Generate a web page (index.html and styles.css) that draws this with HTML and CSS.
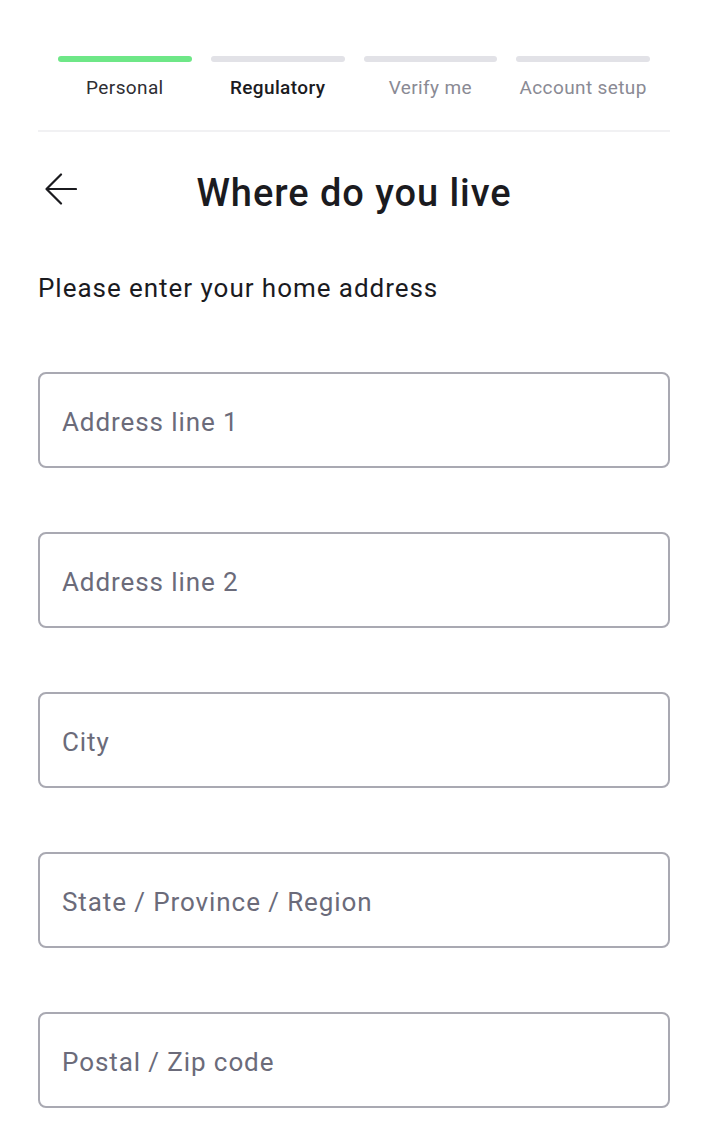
FILE: index.html
```html
<!DOCTYPE html>
<html lang="en">
<head>
  <meta charset="UTF-8" />
  <title>Where do you live</title>
  <meta name="viewport" content="width=device-width, initial-scale=1.0"/>
  <link rel="stylesheet" href="styles.css">
</head>
<body>

<div id="page">
  <div id="steps">
    <div class="step done">
      <div class="step-bar"></div>
      <span>Personal</span>
    </div>
    <div class="step current">
      <div class="step-bar"></div>
      <span>Regulatory</span>
    </div>
    <div class="step">
      <div class="step-bar"></div>
      <span>Verify me</span>
    </div>
    <div class="step">
      <div class="step-bar"></div>
      <span>Account setup</span>
    </div>
  </div>

  <div class="header">
    <button class="back-btn" aria-label="Back">
      <svg width="32" height="32" viewBox="0 0 32 32" fill="none" stroke="#1b1b1f" stroke-width="2.2" stroke-linecap="round" stroke-linejoin="round">
        <path d="M31 16H1.5M16 1.5L1.5 16L16 30.5"/>
      </svg>
    </button>
    <h1>Where do you live</h1>
  </div>

  <p class="intro">Please enter your home address</p>

  <form class="address-form">
    <input type="text" placeholder="Address line 1"/>
    <input type="text" placeholder="Address line 2"/>
    <input type="text" placeholder="City"/>
    <input type="text" placeholder="State / Province / Region"/>
    <input type="text" placeholder="Postal / Zip code"/>
  </form>
</div>

</body>
</html>
```

FILE: styles.css
```css
body {
  margin: 0;
  padding: 0;
  font-family: Roboto, 'Liberation Sans', sans-serif;
  letter-spacing: 0.04em;
  background-color: #fff;
  color: #1b1b1f;
}

#page {
  width: 632px;
  margin-left: 38px;
  padding-top: 56px;
}

/* progress steps */
#steps {
  display: flex;
  gap: 19px;
  padding: 0 20px 31px;
  border-bottom: 2px solid #f1f1f3;
}

.step {
  flex: 1;
  display: flex;
  flex-direction: column;
  align-items: center;
  gap: 14px;
  font-size: 19px;
  letter-spacing: 0.02em;
  color: #8a8a94;
}

.step-bar {
  width: 100%;
  height: 6px;
  border-radius: 3px;
  background-color: #e2e2e7;
}

.step.done .step-bar {
  background-color: #6ee787;
}

.step.done {
  color: #2e2e33;
}

.step.current {
  color: #1b1b1f;
  font-weight: 500;
}

/* heading */
.header {
  position: relative;
  display: flex;
  justify-content: center;
  margin-top: 39px;
}

.back-btn {
  position: absolute;
  left: 7px;
  top: 2px;
  padding: 0;
  border: none;
  background: none;
  cursor: pointer;
}

h1 {
  margin: 0;
  font-size: 38px;
  font-weight: 500;
  letter-spacing: 0.025em;
}

.intro {
  margin: 58px 0 0;
  font-size: 26px;
  letter-spacing: 0.037em;
}

.address-form {
  display: flex;
  flex-direction: column;
  gap: 64px;
  margin-top: 69px;
}

.address-form input {
  box-sizing: border-box;
  height: 96px;
  width: 100%;
  padding: 4px 22px 0;
  font-family: inherit;
  font-size: 26px;
  letter-spacing: 0.035em;
  border: 2px solid #a9a9b2;
  border-radius: 8px;
  outline: none;
}

.address-form input::placeholder {
  color: #6b6b7a;
}
```
